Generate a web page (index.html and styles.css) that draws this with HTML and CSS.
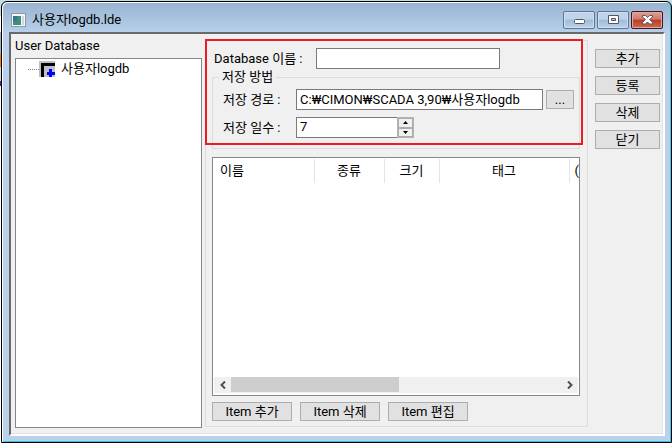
FILE: index.html
```html
<!DOCTYPE html>
<html lang="ko">
<head>
  <meta charset="UTF-8">
  <meta name="viewport" content="width=device-width, initial-scale=1.0">
  <title>사용자logdb.lde</title>
  <link rel="stylesheet" href="styles.css">
</head>
<body>
  <div class="window">
    <header class="titlebar">
      <svg class="app-icon" width="15" height="14" viewBox="0 0 15 14">
        <rect x="0.5" y="0.5" width="14" height="13" fill="#f4f7fa" stroke="#8c99a6"/>
        <rect x="2" y="3" width="8" height="9" fill="#3f8f78"/>
        <rect x="2" y="3" width="4" height="5" fill="#3c6f9c"/>
        <rect x="11" y="3" width="2" height="9" fill="#cfd6dc"/>
      </svg>
      <h1>사용자logdb.lde</h1>
      <div class="window-buttons">
        <button class="win-btn" aria-label="최소화">
          <svg width="13" height="10" viewBox="0 0 13 10"><rect x="1.5" y="4.5" width="10" height="4" rx="1" fill="#fff" stroke="#535666"/></svg>
        </button>
        <button class="win-btn" aria-label="최대화">
          <svg width="13" height="10" viewBox="0 0 13 10"><path d="M1.5.5h10v8h-10zM4.5 3.5v2h4v-2z" fill="#fff" fill-rule="evenodd" stroke="#535666"/></svg>
        </button>
        <button class="win-btn close" aria-label="닫기">
          <svg width="13" height="10" viewBox="0 0 13 10"><path d="M1.5.5h3l2 2 2-2h3v1.500L8.500 4.500l3 3V9h-3l-2-2-2 2h-3V7.500l3-3-3-2.500z" fill="#fff" stroke="#535666"/></svg>
        </button>
      </div>
    </header>

    <main class="client">
      <section class="database">
        <h2>User Database</h2>
        <ul class="tree">
          <li>
            <span class="branch"></span>
            <svg width="16" height="16" viewBox="0 0 16 16">
              <rect width="16" height="16" fill="#c0c0c0"/>
              <path d="M2 2h14v3H5v11H2z" fill="#000"/>
              <path d="M10 8h3v3h3v3h-3v2h-3v-2H8v-3h2z" fill="#00f"/>
            </svg>
            <span>사용자logdb</span>
          </li>
        </ul>
      </section>

      <section class="detail">
        <div class="highlight"></div>
        <div class="field name-field">
          <label for="dbname">Database 이름 :</label>
          <input type="text" id="dbname">
        </div>

        <fieldset>
          <legend>저장 방법</legend>
          <div class="field">
            <label for="path">저장 경로 :</label>
            <input type="text" id="path" value="C:₩CIMON₩SCADA 3,90₩사용자logdb">
            <button class="browse" aria-label="찾아보기">...</button>
          </div>
          <div class="field">
            <label for="days">저장 일수 :</label>
            <div class="spinner">
              <input type="number" id="days" value="7">
              <div class="spin-buttons">
                <button aria-label="증가"><svg width="5" height="3" viewBox="0 0 5 3"><path d="M0 3l2.500-3L5 3z"/></svg></button>
                <button aria-label="감소"><svg width="5" height="3" viewBox="0 0 5 3"><path d="M0 0l2.500 3L5 0z"/></svg></button>
              </div>
            </div>
          </div>
        </fieldset>

        <div class="list">
          <table>
            <thead>
              <tr>
                <th class="col-name">이름</th>
                <th class="col-type">종류</th>
                <th class="col-size">크기</th>
                <th class="col-tag">태그</th>
                <th class="col-address">(</th>
              </tr>
            </thead>
          </table>
          <div class="scrollbar">
            <button aria-label="왼쪽"><svg width="6" height="8" viewBox="0 0 6 8"><path d="M5 0.500L1.500 4 5 7.500"/></svg></button>
            <div class="track"><div class="thumb"></div></div>
            <button aria-label="오른쪽"><svg width="6" height="8" viewBox="0 0 6 8"><path d="M1 0.500L4.500 4 1 7.500"/></svg></button>
          </div>
        </div>

        <div class="item-buttons">
          <button>Item 추가</button>
          <button>Item 삭제</button>
          <button>Item 편집</button>
        </div>
      </section>

      <nav class="actions">
        <button>추가</button>
        <button>등록</button>
        <button>삭제</button>
        <button>닫기</button>
      </nav>
    </main>
  </div>
</body>
</html>
```
FILE: styles.css
```css
* {
  box-sizing: border-box;
}

body {
  margin: 0;
  padding: 1px 0 0 1px;
  height: 100vh;
  background: linear-gradient(#c5dfe6 16px, #fff 16px, #fff 32px, #9fb4c8 32px, #9fb4c8 54px, #ff7f00 54px, #ff7f00 67px, #d5dbe2 67px, #d5dbe2 81px, #1c3fa8 81px, #1c3fa8 84px, #b00020 84px, #b00020 86px, #fff 86px);
  color: #000;
  font-family: Roboto, "Noto Sans CJK KR", sans-serif;
  font-size: 13px;
  line-height: 16px;
}

h1, h2 {
  margin: 0;
  font-size: 13px;
  font-weight: normal;
}

button, input {
  margin: 0;
  font: inherit;
  color: inherit;
}

button {
  height: 19px;
  padding: 0;
  background-color: #e1e1e1;
  border: 1px solid #adadad;
}

input {
  min-width: 0;
  height: 21px;
  padding: 0 3px 3px;
  background-color: #fff;
  border: 1px solid #7a7a7a;
  border-radius: 0;
}

.window {
  display: flex;
  flex-direction: column;
  height: 100%;
  padding: 1px 6px 6px 7px;
  background: linear-gradient(#98b3d1, #b9d1ea 32px);
  border: 1px solid #000;
  border-radius: 6px 6px 0 0;
  box-shadow: inset 1px 1px #fff, inset -1px -1px #35c4e8;
}

.titlebar {
  display: flex;
  align-items: center;
  height: 29px;
  padding: 5px 2px 0;
  gap: 6px;
}

.titlebar h1 {
  flex: 1;
}

.window-buttons {
  display: flex;
  gap: 2px;
}

.win-btn {
  display: flex;
  align-items: center;
  justify-content: center;
  width: 32px;
  height: 18px;
  background: linear-gradient(#bfd3e9 45%, #a0bbd8 50%, #bbd3ec);
  border: 1px solid #5b7595;
  border-radius: 2px;
  box-shadow: inset 0 0 0 1px #d0e0f0;
}

.win-btn.close {
  background: linear-gradient(#e0a093, #d0796a 45%, #b83d24 50%, #cc6b4c);
  border-color: #431522;
  box-shadow: inset 0 0 0 1px #e0a89f;
}

.client {
  display: flex;
  flex: 1;
  min-height: 0;
  padding: 4px 3px 6px 4px;
  background-color: #f0f0f0;
  border: 2px solid;
  border-color: #696969 #fff #fff #696969;
  box-shadow: inset -1px -1px #e3e3e3;
}

.database {
  display: flex;
  flex-direction: column;
  flex: 0 0 29%;
  gap: 4px;
}

.tree {
  flex: 1;
  margin: 0;
  padding: 1px 12px;
  list-style: none;
  background-color: #fff;
  border: 1px solid #828790;
}

.tree li {
  display: flex;
  align-items: center;
  height: 18px;
}

.tree li svg {
  margin-right: 6px;
}

.branch {
  width: 11px;
  border-top: 1px dotted #808080;
}

.detail {
  position: relative;
  display: flex;
  flex-direction: column;
  flex: 1;
  min-width: 0;
  margin: 2px 7px 1px 3px;
  padding: 7px 7px 5px 6px;
  border: 1px solid #dcdcdc;
}

/* red frame over the database settings */
.highlight {
  position: absolute;
  top: -2px;
  left: -1px;
  right: 4px;
  height: 106px;
  border: 2px solid #ed1c24;
  pointer-events: none;
}

.field {
  display: flex;
  align-items: center;
}

.name-field label {
  width: 104px;
  padding-left: 2px;
}

.name-field input {
  width: 184px;
}

fieldset {
  display: flex;
  flex-direction: column;
  gap: 7px;
  min-width: 0;
  margin: 0 0 8px;
  padding: 4px 5px 10px 10px;
  border: 1px solid #dcdcdc;
}

legend {
  margin-left: -4px;
  padding: 0 3px;
}

fieldset label {
  flex: 0 0 73px;
}

#path {
  flex: 1;
}

.browse {
  width: 28px;
  margin-left: 3px;
}

.spinner {
  display: flex;
  width: 118px;
}

.spinner input {
  flex: 1;
  border-right: 0;
  appearance: textfield;
}

.spinner input::-webkit-inner-spin-button {
  display: none;
}

.spin-buttons {
  display: flex;
  flex-direction: column;
  width: 17px;
  border: 1px solid #b4b4b4;
}

.spin-buttons button {
  display: flex;
  flex: 1;
  align-items: center;
  justify-content: center;
  height: auto;
  background-color: #f0f0f0;
}

.list {
  display: flex;
  flex-direction: column;
  flex: 1;
  min-height: 0;
  padding: 1px;
  background-color: #fff;
  border: 1px solid #828790;
  overflow: hidden;
}

table {
  width: 100%;
  table-layout: fixed;
  border-collapse: collapse;
}

th {
  height: 24px;
  padding: 0;
  border-right: 1px solid #e5e5e5;
  font-weight: normal;
  white-space: nowrap;
}

th:last-child {
  border-right: 0;
}

.col-name {
  width: 100px;
  padding-left: 6px;
  text-align: left;
}

.col-type {
  width: 70px;
}

.col-size {
  width: 55px;
}

.col-tag {
  width: 130px;
}

.col-address {
  padding-left: 5px;
  text-align: left;
}

.scrollbar {
  display: flex;
  height: 17px;
  margin-top: auto;
  background-color: #f0f0f0;
  border-bottom: 1px solid #fff;
}

.scrollbar button {
  display: flex;
  align-items: center;
  justify-content: center;
  width: 17px;
  height: 16px;
  background: none;
  border: 0;
}

.scrollbar path {
  fill: none;
  stroke: #505050;
  stroke-width: 2;
}

.track {
  flex: 1;
}

.thumb {
  width: 51%;
  height: 15px;
  background-color: #cdcdcd;
}

.item-buttons {
  display: flex;
  gap: 8px;
  margin-top: 6px;
}

.item-buttons button {
  width: 80px;
}

.actions {
  display: flex;
  flex-direction: column;
  flex: 0 0 65px;
  gap: 8px;
  padding-top: 11px;
}

.item-buttons button,
.actions button {
  line-height: 15px;
}
```
